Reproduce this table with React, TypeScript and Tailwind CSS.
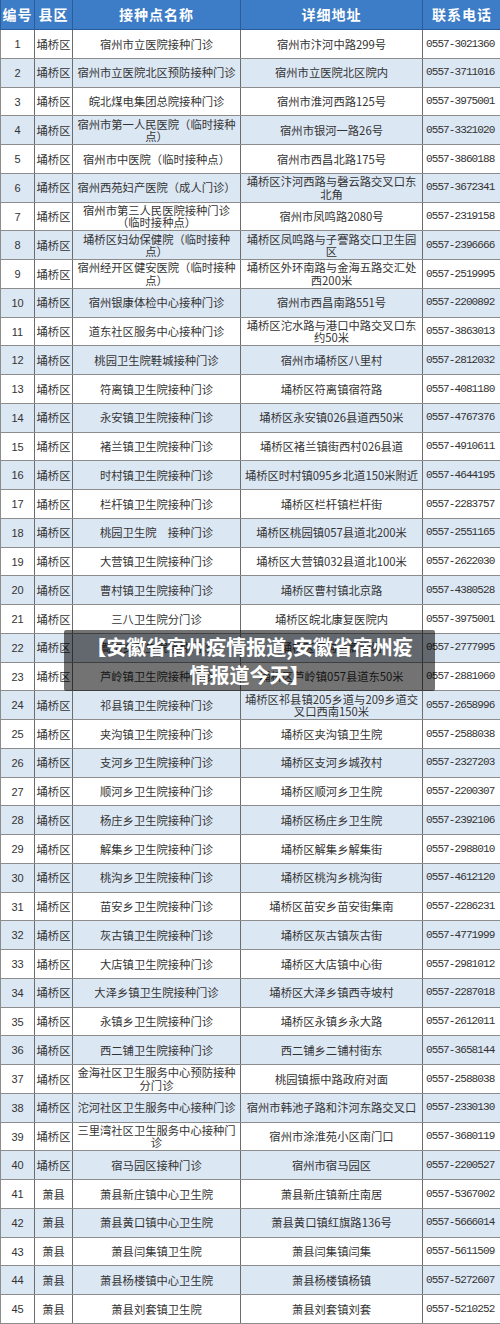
import React from 'react';

type Row = [string, string, string, string];

const rows: Row[] = [
  ['埇桥区', '宿州市立医院接种门诊', '宿州市汴河中路299号', '0557-3021360'],
  ['埇桥区', '宿州市立医院北区预防接种门诊', '宿州市立医院北区院内', '0557-3711016'],
  ['埇桥区', '皖北煤电集团总院接种门诊', '宿州市淮河西路125号', '0557-3975001'],
  ['埇桥区', '宿州市第一人民医院（临时接种\n点）', '宿州市银河一路26号', '0557-3321020'],
  ['埇桥区', '宿州市中医院（临时接种点）', '宿州市西昌北路175号', '0557-3860188'],
  ['埇桥区', '宿州西苑妇产医院（成人门诊）', '埇桥区汴河西路与磬云路交叉口东\n北角', '0557-3672341'],
  ['埇桥区', '宿州市第三人民医院接种门诊\n（临时接种点）', '宿州市凤鸣路2080号', '0557-2319158'],
  ['埇桥区', '埇桥区妇幼保健院（临时接种\n点）', '埇桥区凤鸣路与子謇路交口卫生园\n区', '0557-2396666'],
  ['埇桥区', '宿州经开区健安医院（临时接种\n点）', '埇桥区外环南路与金海五路交汇处\n西200米', '0557-2519995'],
  ['埇桥区', '宿州银康体检中心接种门诊', '宿州市西昌南路551号', '0557-2200892'],
  ['埇桥区', '道东社区服务中心接种门诊', '埇桥区沱水路与港口中路交叉口东\n约50米', '0557-3863013'],
  ['埇桥区', '桃园卫生院鞋城接种门诊', '宿州市埇桥区八里村', '0557-2812032'],
  ['埇桥区', '符离镇卫生院接种门诊', '埇桥区符离镇宿符路', '0557-4081180'],
  ['埇桥区', '永安镇卫生院接种门诊', '埇桥区永安镇026县道西50米', '0557-4767376'],
  ['埇桥区', '褚兰镇卫生院接种门诊', '埇桥区褚兰镇街西村026县道', '0557-4910611'],
  ['埇桥区', '时村镇卫生院接种门诊', '埇桥区时村镇095乡北道150米附近', '0557-4644195'],
  ['埇桥区', '栏杆镇卫生院接种门诊', '埇桥区栏杆镇栏杆街', '0557-2283757'],
  ['埇桥区', '桃园卫生院　接种门诊', '埇桥区桃园镇057县道北200米', '0557-2551165'],
  ['埇桥区', '大营镇卫生院接种门诊', '埇桥区大营镇032县道北100米', '0557-2622030'],
  ['埇桥区', '曹村镇卫生院接种门诊', '埇桥区曹村镇北京路', '0557-4380528'],
  ['埇桥区', '三八卫生院分门诊', '埇桥区皖北康复医院内', '0557-3975001'],
  ['埇桥区', '蒿沟乡卫生院接种门诊', '埇桥区蒿沟乡蒿沟街', '0557-2777995'],
  ['埇桥区', '芦岭镇卫生院接种门诊', '埇桥区芦岭镇057县道东50米', '0557-2881060'],
  ['埇桥区', '祁县镇卫生院接种门诊', '埇桥区祁县镇205乡道与209乡道交\n叉口西南150米', '0557-2658996'],
  ['埇桥区', '夹沟镇卫生院接种门诊', '埇桥区夹沟镇卫生院', '0557-2588038'],
  ['埇桥区', '支河乡卫生院接种门诊', '埇桥区支河乡城孜村', '0557-2327203'],
  ['埇桥区', '顺河乡卫生院接种门诊', '埇桥区顺河乡卫生院', '0557-2200307'],
  ['埇桥区', '杨庄乡卫生院接种门诊', '埇桥区杨庄乡卫生院', '0557-2392106'],
  ['埇桥区', '解集乡卫生院接种门诊', '埇桥区解集乡解集街', '0557-2988010'],
  ['埇桥区', '桃沟乡卫生院接种门诊', '埇桥区桃沟乡桃沟街', '0557-4612120'],
  ['埇桥区', '苗安乡卫生院接种门诊', '埇桥区苗安乡苗安街集南', '0557-2286231'],
  ['埇桥区', '灰古镇卫生院接种门诊', '埇桥区灰古镇灰古街', '0557-4771999'],
  ['埇桥区', '大店镇卫生院接种门诊', '埇桥区大店镇中心街', '0557-2981012'],
  ['埇桥区', '大泽乡镇卫生院接种门诊', '埇桥区大泽乡镇西寺坡村', '0557-2287018'],
  ['埇桥区', '永镇乡卫生院接种门诊', '埇桥区永镇乡永大路', '0557-2612011'],
  ['埇桥区', '西二铺卫生院接种门诊', '西二铺乡二铺村街东', '0557-3658144'],
  ['埇桥区', '金海社区卫生服务中心预防接种\n分门诊', '桃园镇振中路政府对面', '0557-2588038'],
  ['埇桥区', '沱河社区卫生服务中心接种门诊', '宿州市韩池子路和汴河东路交叉口', '0557-2330130'],
  ['埇桥区', '三里湾社区卫生服务中心接种门\n诊', '宿州市涂淮苑小区南门口', '0557-3680119'],
  ['埇桥区', '宿马园区接种门诊', '宿州市宿马园区', '0557-2200527'],
  ['萧县', '萧县新庄镇中心卫生院', '萧县新庄镇新庄南居', '0557-5367002'],
  ['萧县', '萧县黄口镇中心卫生院', '萧县黄口镇红旗路136号', '0557-5666014'],
  ['萧县', '萧县闫集镇卫生院', '萧县闫集镇闫集', '0557-5611509'],
  ['萧县', '萧县杨楼镇中心卫生院', '萧县杨楼镇杨镇', '0557-5272607'],
  ['萧县', '萧县刘套镇卫生院', '萧县刘套镇刘套', '0557-5210252'],
];

const cjk = "font-['Noto_Sans_CJK_SC','Noto_Sans',sans-serif]";

const Cell: React.FC<{ children: React.ReactNode }> = ({ children }) => (
  <div className="flex items-center justify-center overflow-hidden border-r border-[#6c6c6c]">
    <span className="whitespace-pre text-center leading-[12.5px]">{children}</span>
  </div>
);

export default function App() {
  return (
    <div className={`relative w-[500px] bg-white text-[#333] ${cjk}`}>
      {/* header */}
      <div className="grid h-[30px] grid-cols-[34px_38px_168px_182px_78px] border-b border-l border-[#2b5c99] bg-[#3d7cc6] text-[14px] font-bold text-white">
        {['编号', '县区', '接种点名称', '详细地址', '联系电话'].map((h, i) => (
          <div
            key={h}
            className={`flex items-center justify-center tracking-[1px] ${
              i < 4 ? 'border-r border-[#2b5c99]' : ''
            }`}
          >
            {h}
          </div>
        ))}
      </div>

      {rows.map(([county, name, addr, phone], i) => (
        <div
          key={i}
          className={`grid h-[28.75px] grid-cols-[34px_38px_168px_182px_78px] border-b border-l border-[#8c8c8c] text-[11.3px] ${
            i % 2 === 1 ? 'bg-[#dce7f4]' : 'bg-white'
          }`}
        >
          <Cell>
            <span className="font-['Liberation_Sans',sans-serif] text-[11px]">{i + 1}</span>
          </Cell>
          <Cell>{county}</Cell>
          <Cell>{name}</Cell>
          <Cell>{addr}</Cell>
          <div className="flex items-center overflow-hidden pl-[3px]">
            <span className="whitespace-nowrap font-['Liberation_Mono',monospace] text-[11px] tracking-[-0.9px]">
              {phone}
            </span>
          </div>
        </div>
      ))}

      {/* title overlay */}
      <div className="absolute left-[64px] top-[630px] w-[371px] rounded-[2px] bg-black/55 px-[15px] py-[3px] text-center text-[20px] font-bold leading-[27.5px] text-white">
        【安徽省宿州疫情报道,安徽省宿州疫
        <br />
        情报道今天】
      </div>
    </div>
  );
}
